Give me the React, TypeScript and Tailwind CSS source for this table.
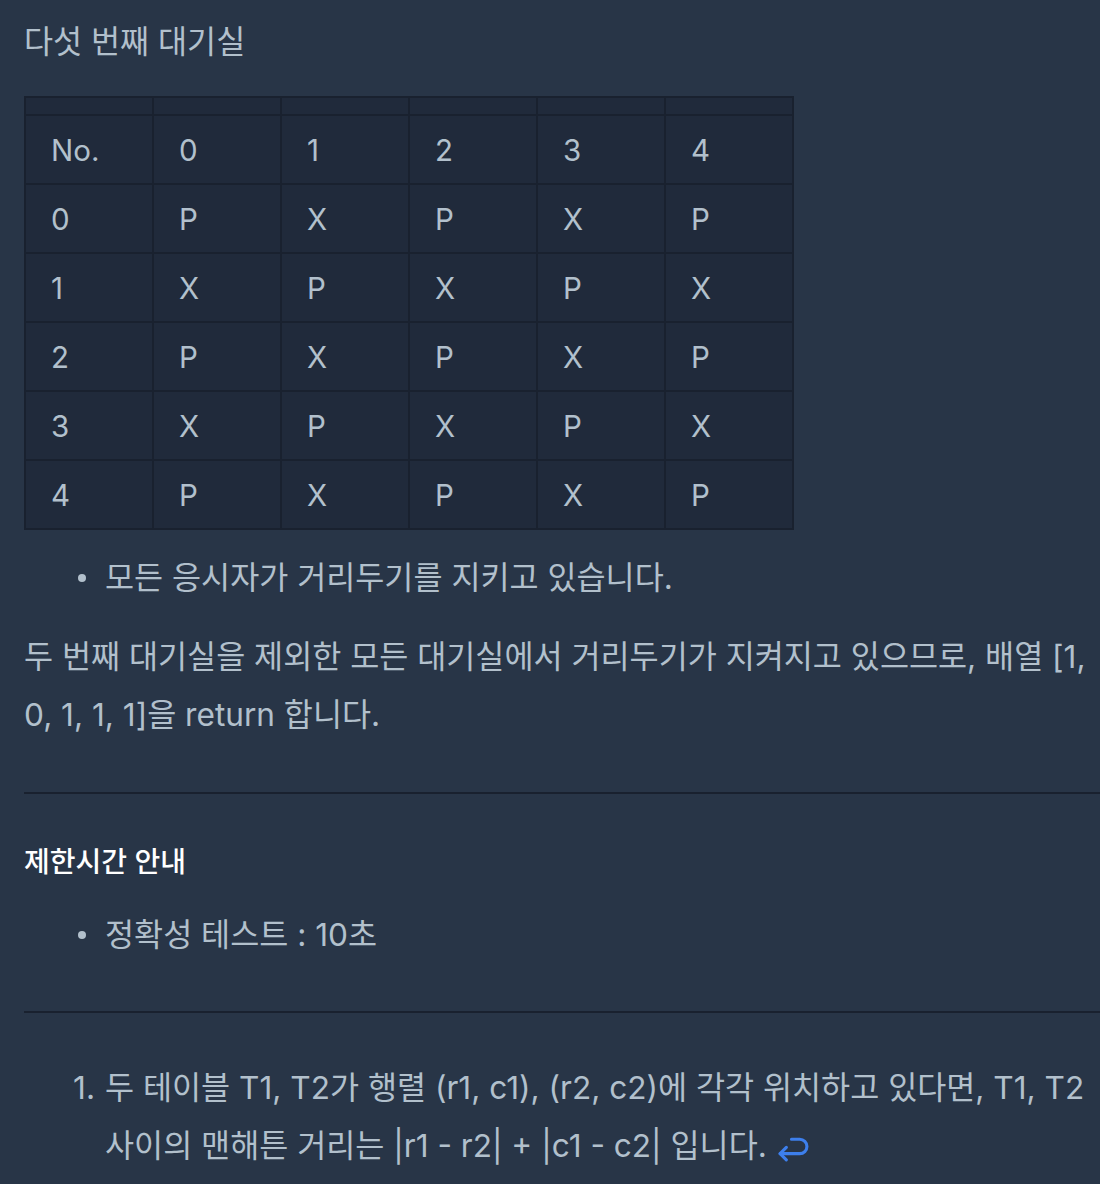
import React from "react";

const rows = [
  ["0", "P", "X", "P", "X", "P"],
  ["1", "X", "P", "X", "P", "X"],
  ["2", "P", "X", "P", "X", "P"],
  ["3", "X", "P", "X", "P", "X"],
  ["4", "P", "X", "P", "X", "P"],
];
const head = ["No.", "0", "1", "2", "3", "4"];

function Dot() {
  return (
    <span className="flex w-[81px] shrink-0 items-center">
      <span className="ml-[54px] h-[8px] w-[8px] rounded-full bg-[#b2c0cc]" />
    </span>
  );
}

export default function App() {
  return (
    <div
      className="min-h-[1184px] w-[1100px] overflow-hidden bg-[#283547] pl-[24px] text-[31.6px] leading-[58px] text-[#b2c0cc]"
      style={{ fontFamily: 'Inter, "Noto Sans CJK KR", sans-serif' }}
    >
      <p className="pt-[13px] whitespace-nowrap">다섯 번째 대기실</p>

      <div className="mt-[25px] grid w-[770px] grid-cols-[repeat(6,126px)] gap-[2px] bg-[#19212f] p-[2px] text-[29.5px]">
        {head.map((_, i) => (
          <div key={"e" + i} className="h-[16px] bg-[#202a3b]" />
        ))}
        {head.map((h, i) => (
          <div key={"h" + i} className="flex h-[67px] items-center bg-[#202a3b] pl-[25px]">
            {h}
          </div>
        ))}
        {rows.map((r, ri) =>
          r.map((c, ci) => (
            <div key={ri + "-" + ci} className="flex h-[67px] items-center bg-[#202a3b] pl-[25px]">
              {c}
            </div>
          ))
        )}
      </div>

      <div className="mt-[19px] flex whitespace-nowrap">
        <Dot />
        <span>모든 응시자가 거리두기를 지키고 있습니다.</span>
      </div>

      <p className="mt-[21px] whitespace-nowrap">
        두 번째 대기실을 제외한 모든 대기실에서 거리두기가 지켜지고 있으므로, 배열 [1,
        <br />
        0, 1, 1, 1]을 return 합니다.
      </p>

      <div className="mt-[48px] h-[2px] bg-[#19212f]" />

      <h5 className="mt-[48px] text-[28px] leading-[40px] font-medium text-white whitespace-nowrap">
        제한시간 안내
      </h5>

      <div className="mt-[24px] flex whitespace-nowrap">
        <Dot />
        <span>정확성 테스트 : 10초</span>
      </div>

      <div className="mt-[47px] h-[2px] bg-[#19212f]" />

      <div className="mt-[46px] flex whitespace-nowrap">
        <span className="w-[81px] shrink-0 pr-[10px] text-right">1.</span>
        <span>
          두 테이블 T1, T2가 행렬 (r1, c1), (r2, c2)에 각각 위치하고 있다면, T1, T2
          <br />
          사이의 맨해튼 거리는 |r1 - r2| + |c1 - c2| 입니다.{" "}
          <svg
            className="inline-block align-middle"
            width="33"
            height="27"
            viewBox="0 0 32 26"
            fill="none"
            stroke="#3d7fec"
            strokeWidth="3"
            strokeLinecap="round"
            strokeLinejoin="round"
          >
            <path d="M15 4 H23 A7 7 0 0 1 23 18 H4" />
            <path d="M10 12 L4 18 L10 24" />
          </svg>
        </span>
      </div>
    </div>
  );
}
